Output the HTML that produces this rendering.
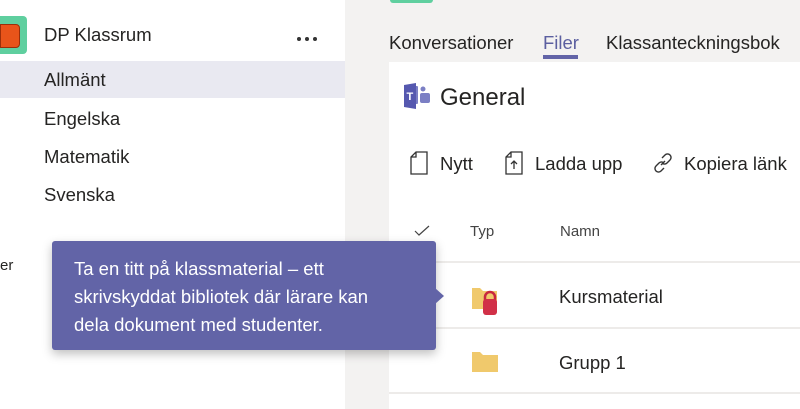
<!DOCTYPE html>
<html><head><meta charset="utf-8"><style>
body{margin:0;width:800px;height:409px;overflow:hidden;position:relative;background:#fff;font-family:"Liberation Sans",sans-serif;color:#252423}
.a{position:absolute;white-space:nowrap}
</style></head><body>
<div class="a" style="left:0;top:0;width:345px;height:409px;background:#fff"></div>
<div class="a" style="left:0;top:16px;width:27px;height:38px;background:#5fcf9f;border-radius:0 4px 4px 0"></div>
<div class="a" style="left:0;top:24px;width:18px;height:22px;background:#e8541a;border:1px solid #9b2f0a;border-radius:0 4px 4px 0"></div>
<div class="a" style="left:44px;top:24px;font-size:18.5px">DP Klassrum</div>
<svg class="a" style="left:296px;top:36px" width="24" height="6"><circle cx="3" cy="3" r="2" fill="#333"/><circle cx="11" cy="3" r="2" fill="#333"/><circle cx="19" cy="3" r="2" fill="#333"/></svg>
<div class="a" style="left:0;top:61px;width:345px;height:37px;background:#e9e9f1"></div>
<div class="a" style="left:44px;top:69px;font-size:18.5px">Allmänt</div>
<div class="a" style="left:44px;top:108px;font-size:18.5px">Engelska</div>
<div class="a" style="left:44px;top:146px;font-size:18.5px">Matematik</div>
<div class="a" style="left:44px;top:184px;font-size:18.5px">Svenska</div>
<div class="a" style="left:0;top:257px;font-size:15px">er</div>
<div class="a" style="left:345px;top:0;width:455px;height:409px;background:#f3f2f1"></div>
<div class="a" style="left:390px;top:0;width:43px;height:3px;background:#5fcf9f;border-radius:0 0 3px 3px"></div>
<div class="a" style="left:389px;top:32px;font-size:18.5px">Konversationer</div>
<div class="a" style="left:543px;top:32px;font-size:18.5px;color:#5b5fa0">Filer</div>
<div class="a" style="left:543px;top:55px;width:35px;height:4px;background:#6264a7"></div>
<div class="a" style="left:606px;top:32px;font-size:18.5px">Klassanteckningsbok</div>
<div class="a" style="left:389px;top:62px;width:411px;height:347px;background:#fff"></div>
<svg class="a" style="left:403px;top:82px" width="30" height="28" viewBox="0 0 30 28"><rect x="9" y="4" width="6" height="18" rx="1" fill="#7b7fc4"/><circle cx="20" cy="7" r="2.5" fill="#7b7fc4"/><rect x="17" y="11" width="10" height="10" rx="2" fill="#7b7fc4"/><path d="M1 3 L13 1 V27 L1 25Z" fill="#5558af"/><text x="3.5" y="18" font-size="11" font-weight="bold" fill="#fff" font-family="Liberation Sans">T</text></svg>
<div class="a" style="left:440px;top:84px;font-size:24px">General</div>
<svg class="a" style="left:410px;top:151px" width="18" height="24" viewBox="0 0 18 24" fill="none" stroke="#333" stroke-width="1.3"><path d="M6 1H17V23H1V6Z M6 1V6H1"/></svg>
<div class="a" style="left:440px;top:153px;font-size:18.5px">Nytt</div>
<svg class="a" style="left:505px;top:151px" width="18" height="24" viewBox="0 0 18 24" fill="none" stroke="#333" stroke-width="1.3"><path d="M6 1H17V23H1V6Z M6 1V6H1 M9 18V10 M6 13L9 10L12 13"/></svg>
<div class="a" style="left:535px;top:153px;font-size:18.5px">Ladda upp</div>
<svg class="a" style="left:652px;top:152px" width="22" height="22" viewBox="0 0 22 22" fill="none" stroke="#333" stroke-width="1.4"><path d="M9 13l4-4 M10 6l3-3a3.5 3.5 0 0 1 5 5l-3 3a3.5 3.5 0 0 1-5 0 M12 16l-3 3a3.5 3.5 0 0 1-5-5l3-3a3.5 3.5 0 0 1 5 0"/></svg>
<div class="a" style="left:684px;top:153px;font-size:18.5px">Kopiera länk</div>
<svg class="a" style="left:414px;top:225px" width="16" height="12" viewBox="0 0 16 12" fill="none" stroke="#444" stroke-width="1.2"><path d="M1 6l4 4 10-9"/></svg>
<div class="a" style="left:470px;top:223px;font-size:15px;color:#444">Typ</div>
<div class="a" style="left:560px;top:223px;font-size:15px;color:#444">Namn</div>
<div class="a" style="left:389px;top:261px;width:411px;height:2px;background:#edebe9"></div>
<div class="a" style="left:389px;top:327px;width:411px;height:2px;background:#edebe9"></div>
<div class="a" style="left:389px;top:392px;width:411px;height:2px;background:#edebe9"></div>
<svg class="a" style="left:471px;top:285px" width="36" height="35" viewBox="0 0 36 35"><path d="M1 3h8l3 3h14v18H1Z" fill="#f0c96c"/><path d="M14 15v-3a5 5 0 0 1 10 0v3" fill="none" stroke="#c8273f" stroke-width="2.5"/><rect x="12" y="14" width="14" height="16" rx="3" fill="#d13048"/></svg>
<svg class="a" style="left:471px;top:351px" width="28" height="22" viewBox="0 0 28 22"><path d="M1 1h8l3 3h15v17H1Z" fill="#f0c96c"/></svg>
<div class="a" style="left:559px;top:286px;font-size:18.5px">Kursmaterial</div>
<div class="a" style="left:559px;top:352px;font-size:18.5px">Grupp 1</div>
<div class="a" style="left:52px;top:241px;width:384px;height:109px;background:#6264a7;border-radius:3px;box-shadow:0 4px 10px rgba(0,0,0,.25)"></div>
<div class="a" style="left:435px;top:288px;width:0;height:0;border-top:8px solid transparent;border-bottom:8px solid transparent;border-left:9px solid #6264a7"></div>
<div class="a" style="left:74px;top:255px;font-size:18.5px;line-height:28px;color:#fff">Ta en titt på klassmaterial – ett<br>skrivskyddat bibliotek där lärare kan<br>dela dokument med studenter.</div>
</body></html>
